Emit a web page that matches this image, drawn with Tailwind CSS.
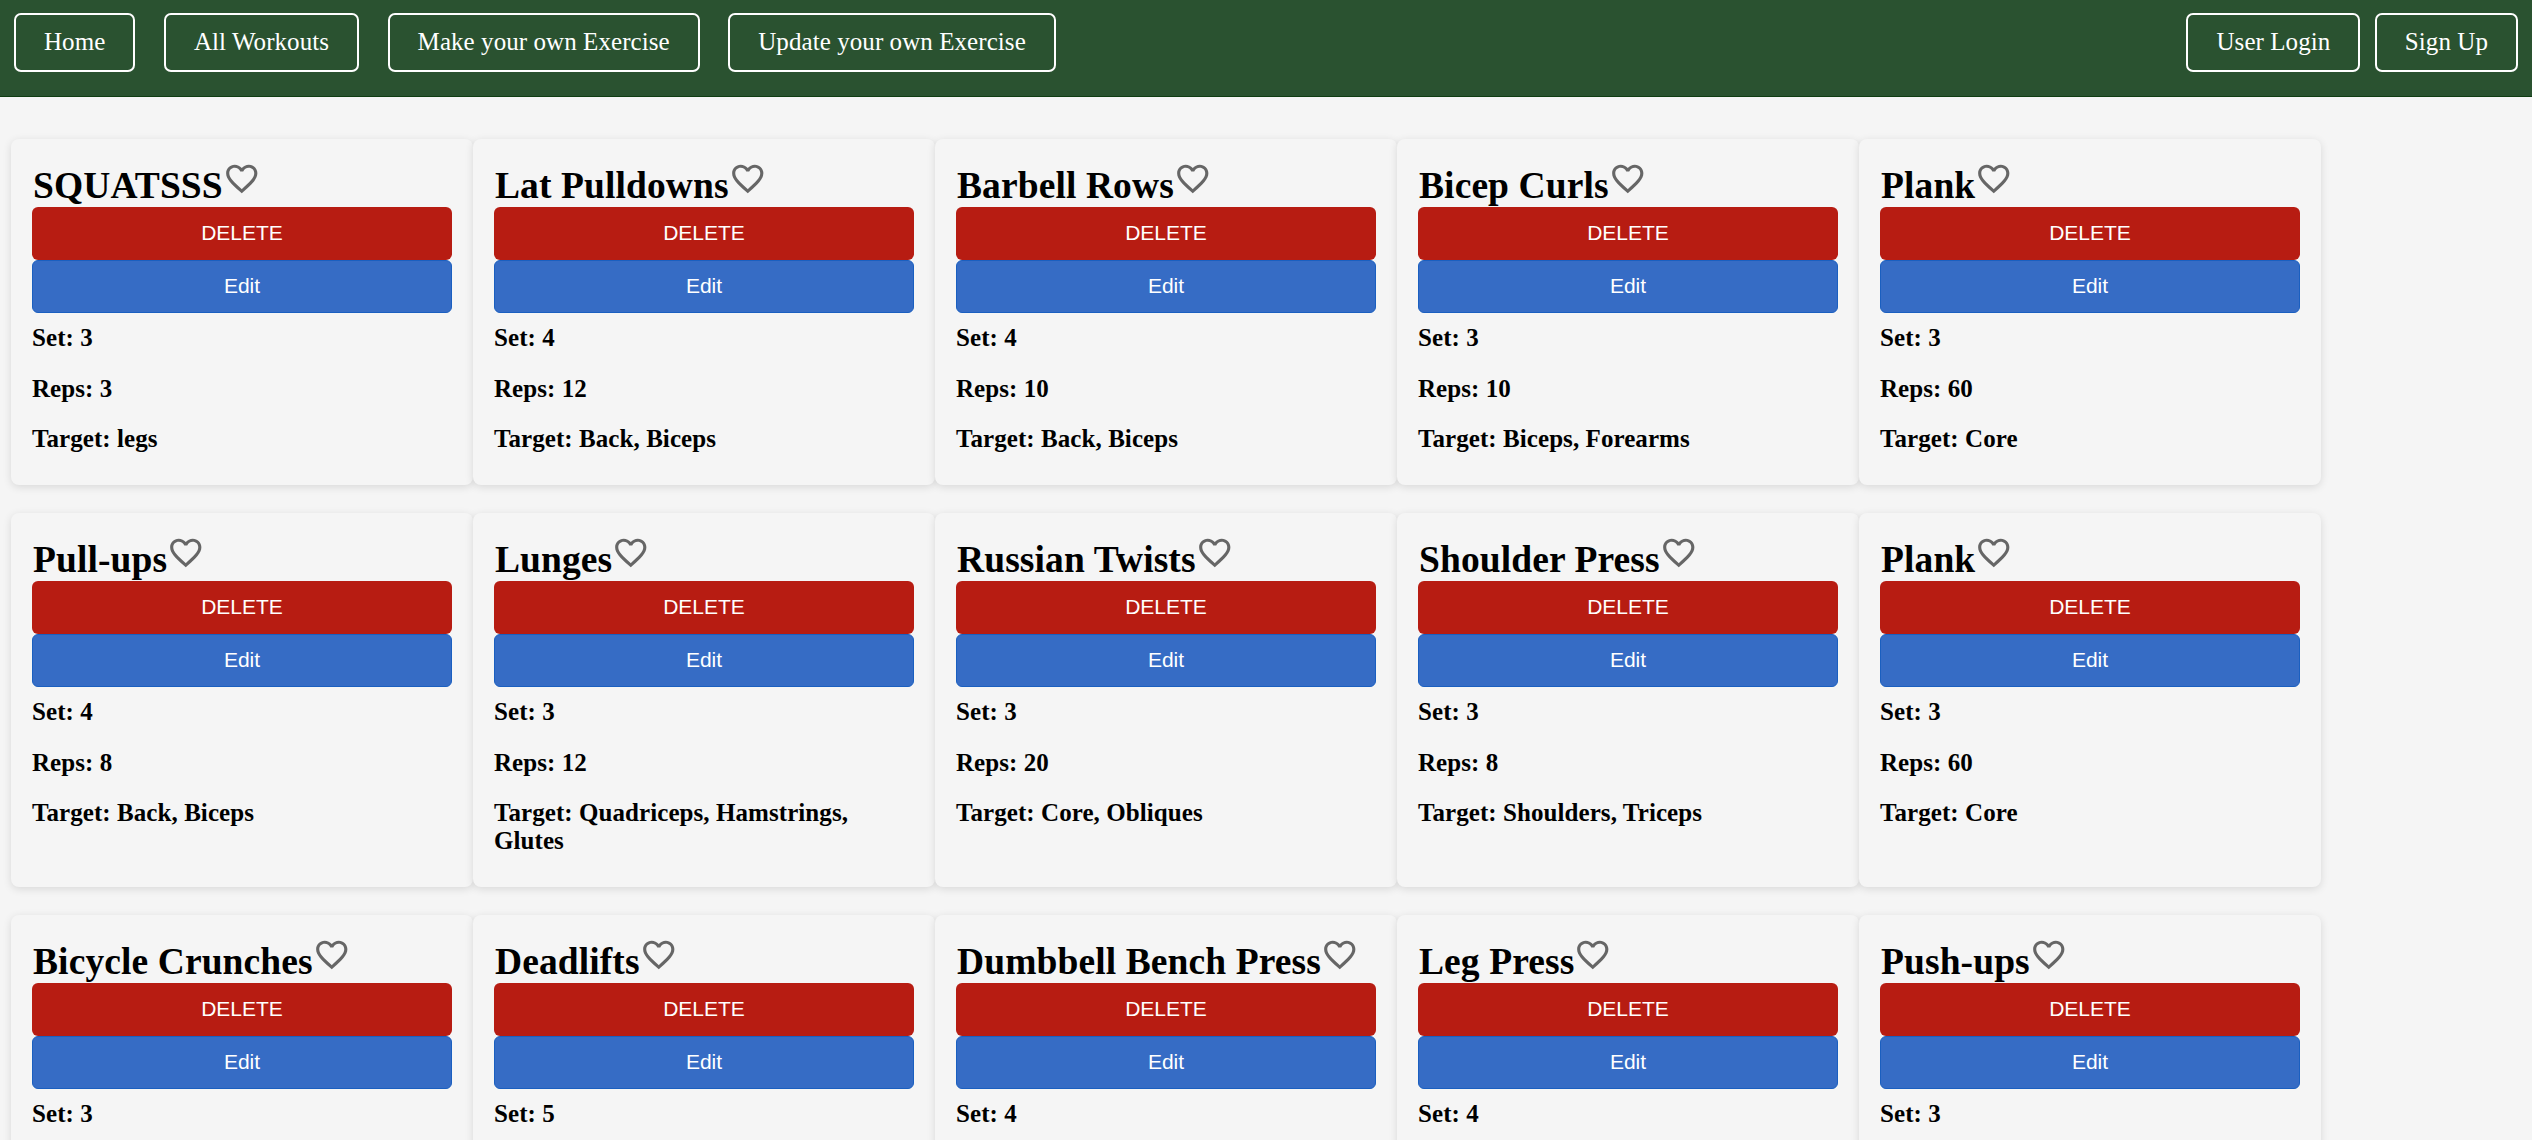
<!DOCTYPE html>
<html lang="en">
<head>
  <meta charset="UTF-8" />
  <title>Workouts</title>
  <script src="https://cdn.jsdelivr.net/npm/@tailwindcss/browser@4"></script>
</head>
<body class="h-screen overflow-hidden bg-[#f5f5f5] font-['Liberation_Serif',serif] text-black">
  <nav class="flex h-[97px] justify-between border-b border-[#0f3d12] bg-[#2a5230] pl-[14px] pr-[14px] pt-[13px]">
    <div class="flex items-start gap-[28.5px]">
      <a class="rounded-[7px] border-[2.5px] border-white px-[28px] py-[13px] text-[25px] leading-[28.75px] tracking-[0.07px] text-white">Home</a>
      <a class="rounded-[7px] border-[2.5px] border-white px-[28px] py-[13px] text-[25px] leading-[28.75px] tracking-[0.07px] text-white">All Workouts</a>
      <a class="rounded-[7px] border-[2.5px] border-white px-[28px] py-[13px] text-[25px] leading-[28.75px] tracking-[0.07px] text-white">Make your own Exercise</a>
      <a class="rounded-[7px] border-[2.5px] border-white px-[28px] py-[13px] text-[25px] leading-[28.75px] tracking-[0.07px] text-white">Update your own Exercise</a>
    </div>
    <div class="flex items-start gap-[14.5px]">
      <a class="rounded-[7px] border-[2.5px] border-white px-[28px] py-[13px] text-[25px] leading-[28.75px] tracking-[0.07px] text-white">User Login</a>
      <a class="rounded-[7px] border-[2.5px] border-white px-[28px] py-[13px] text-[25px] leading-[28.75px] tracking-[0.07px] text-white">Sign Up</a>
    </div>
  </nav>

  <main id="lista" class="grid grid-cols-[repeat(5,462px)] gap-y-[28px] pl-[11px] pt-[42px]"></main>

  <script>
    const ejercicios = [
      { nombre: "SQUATSSS", set: 3, reps: 3, target: "legs" },
      { nombre: "Lat Pulldowns", set: 4, reps: 12, target: "Back, Biceps" },
      { nombre: "Barbell Rows", set: 4, reps: 10, target: "Back, Biceps" },
      { nombre: "Bicep Curls", set: 3, reps: 10, target: "Biceps, Forearms" },
      { nombre: "Plank", set: 3, reps: 60, target: "Core" },
      { nombre: "Pull-ups", set: 4, reps: 8, target: "Back, Biceps" },
      { nombre: "Lunges", set: 3, reps: 12, target: "Quadriceps, Hamstrings, Glutes" },
      { nombre: "Russian Twists", set: 3, reps: 20, target: "Core, Obliques" },
      { nombre: "Shoulder Press", set: 3, reps: 8, target: "Shoulders, Triceps" },
      { nombre: "Plank", set: 3, reps: 60, target: "Core" },
      // last row is cut off by the window, only the set count shows
      { nombre: "Bicycle Crunches", set: 3 },
      { nombre: "Deadlifts", set: 5 },
      { nombre: "Dumbbell Bench Press", set: 4 },
      { nombre: "Leg Press", set: 4 },
      { nombre: "Push-ups", set: 3 }
    ];

    const corazon = `<svg viewBox="0 0 24 24" class="inline-block h-[37.5px] w-[37.5px] fill-[#666666] align-baseline"><path d="M16.5 3c-1.74 0-3.41.81-4.5 2.09C10.91 3.81 9.24 3 7.5 3 4.42 3 2 5.42 2 8.5c0 3.78 3.4 6.86 8.55 11.54L12 21.35l1.45-1.32C18.6 15.36 22 12.28 22 8.5 22 5.42 19.58 3 16.5 3zm-4.4 15.55l-.1.1-.1-.1C7.14 14.24 4 11.39 4 8.5 4 6.5 5.5 5 7.5 5c1.54 0 3.04.99 3.57 2.36h1.87C13.46 5.99 14.96 5 16.5 5c2 0 3.5 1.5 3.5 3.5 0 2.89-3.14 5.74-7.9 10.05z"/></svg>`;

    document.getElementById("lista").innerHTML = ejercicios.map(e => `
      <article class="min-h-[346px] rounded-[8px] bg-[#f5f5f5] px-[21px] pt-[21px] pb-[32px] shadow-[0_2px_8px_rgba(0,0,0,0.12)]">
        <h2 class="h-[47px] pl-px text-[37.5px] font-bold leading-[46px] tracking-[0.1px] whitespace-nowrap">${e.nombre}${corazon}</h2>
        <button class="block h-[53px] w-full rounded-[6px] bg-[#b71c12] pb-[2px] font-['Liberation_Sans',sans-serif] text-[21px] text-white">DELETE</button>
        <button class="block h-[53px] w-full rounded-[6px] border border-[#1a5fc0] bg-[#366cc5] pb-[2px] font-['Liberation_Sans',sans-serif] text-[21px] text-white">Edit</button>
        <div class="mt-[11px] flex flex-col gap-[22.6px] text-[25px] font-bold leading-[28px] tracking-[0.07px]">
          <p>Set: ${e.set}</p>
          ${e.reps ? `<p>Reps: ${e.reps}</p><p>Target: ${e.target}</p>` : ""}
        </div>
      </article>
    `).join("");
  </script>
</body>
</html>
